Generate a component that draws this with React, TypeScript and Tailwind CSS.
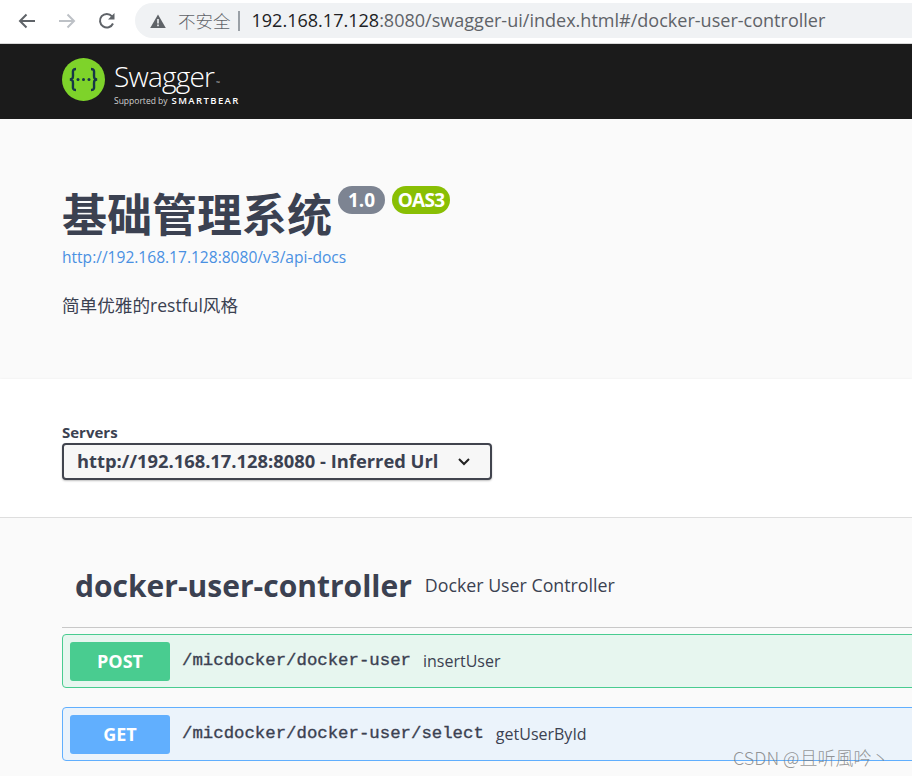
const sans = "font-['Open_Sans','Noto_Sans_CJK_SC',sans-serif]";

function BrowserBar() {
  return (
    <div className="flex h-[44px] items-start border-b border-[#d8d8d8] bg-white pt-[3px]">
      <div className="ml-[18px] mt-[9px] flex w-[117px] items-center gap-[22px]">
        <svg width="18" height="18" viewBox="0 0 18 18" fill="none" stroke="#5f6368" strokeWidth="2">
          <path d="M17 9H2M8.5 2.5 2 9l6.5 6.5" />
        </svg>
        <svg width="18" height="18" viewBox="0 0 18 18" fill="none" stroke="#bdc1c6" strokeWidth="2">
          <path d="M1 9h15M9.5 2.5 16 9l-6.5 6.5" />
        </svg>
        <svg width="18" height="18" viewBox="0 0 18 18" fill="none">
          <path d="M15 11.5A6.8 6.8 0 1 1 14 4.3" stroke="#5f6368" strokeWidth="2" />
          <path d="M16.5 1v6.5H10z" fill="#5f6368" />
        </svg>
      </div>
      <div className="flex h-[35px] flex-1 items-center rounded-l-[18px] bg-[#f0f2f4] pl-[15px] text-[18.050px] text-[#5f6368]">
        <svg width="16" height="14" viewBox="0 0 16 14" className="shrink-0">
          <path d="M8 0.5 15.8 14H0.2z" fill="#5f6368" />
          <rect x="7.2" y="5" width="1.6" height="4.5" fill="#f0f2f4" />
          <rect x="7.2" y="10.5" width="1.6" height="1.7" fill="#f0f2f4" />
        </svg>
        <span className="ml-[12px] font-['Noto_Sans_CJK_SC',sans-serif] text-[17.500px] font-light leading-none">不安全</span>
        <span className="ml-[7px] h-[20px] w-[2px] bg-[#9aa0a6]" />
        <span className={`ml-[12px] whitespace-nowrap ${sans}`}>
          <span className="text-[#202124]">192.168.17.128</span>:8080/swagger-ui/index.html#/docker-user-controller
        </span>
      </div>
    </div>
  );
}

function SwaggerHeader() {
  return (
    <div className="flex h-[75px] items-center bg-[#1b1b1b] pl-[62px] text-white">
      <svg width="43" height="43" viewBox="0 0 43 43" className="mb-[5px] shrink-0">
        <circle cx="21.5" cy="21.5" r="21.5" fill="#7ed32a" />
        <path d="M14 11c-4 0-3 3-3 6s0 4-3 4.500c3 .5 3 1.500 3 4.500s-1 6 3 6M29 11c4 0 3 3 3 6s0 4 3 4.500c-3 .5-3 1.500-3 4.500s1 6-3 6" fill="none" stroke="#173647" strokeWidth="2.400" />
        <circle cx="16" cy="21.500" r="1.500" fill="#173647" />
        <circle cx="21.500" cy="21.500" r="1.500" fill="#173647" />
        <circle cx="27" cy="21.500" r="1.500" fill="#173647" />
      </svg>
      <div className={`ml-[9px] mt-[3px] ${sans}`}>
        <div className="flex h-[32px] items-center text-[28px] font-light leading-none tracking-[-0.8px]">
          Swagger
          <span className="ml-[2px] mt-[14px] text-[5px] tracking-normal">™</span>
        </div>
        <div className="mt-[4px] flex items-center gap-[4px] whitespace-nowrap leading-[10px]">
          <span className="text-[8.500px] text-[#d0d0d0]">Supported by</span>
          <span className="text-[9.500px] font-semibold tracking-[1.400px]">SMARTBEAR</span>
        </div>
      </div>
    </div>
  );
}

function Info() {
  return (
    <div className={`h-[260px] bg-[#fafafa] pl-[62px] text-[#3b4151] ${sans}`}>
      <div className="flex items-start pt-[66px]">
        <h1 className="font-['Noto_Sans_CJK_SC',sans-serif] text-[45px] font-bold leading-[56px]">基础管理系统</h1>
        <span className="ml-[6px] mt-[1px] flex h-[28px] w-[47px] items-center justify-center rounded-full bg-[#7d8492] text-[19px] font-bold text-white">1.0</span>
        <span className="ml-[7px] mt-[1px] flex h-[28px] w-[58px] items-center justify-center rounded-full bg-[#89bf04] text-[19px] font-bold tracking-[-0.7px] text-white">OAS3</span>
      </div>
      <a className="mt-[6px] block text-[15.550px] leading-[20px] text-[#4990e2]">http://192.168.17.128:8080/v3/api-docs</a>
      <p className="mt-[26px] text-[17.600px] leading-[24px]">简单优雅的restful风格</p>
    </div>
  );
}

function Servers() {
  return (
    <div className={`flex h-[139px] flex-col border-b border-[#dedede] bg-white pl-[62px] pt-[44px] text-[#3b4151] shadow-[0_1px_3px_rgba(0,0,0,0.12)] ${sans}`}>
      <span className="text-[15px] font-bold leading-[18px]">Servers</span>
      <div className="mt-[2px] flex h-[37px] w-[430px] items-center rounded-[4px] border-2 border-[#41444e] bg-[#f7f7f7] pb-[2px] pl-[13px] text-[18.350px] font-bold shadow-[0_1px_2px_rgba(0,0,0,0.25)]">
        <span className="whitespace-nowrap">http://192.168.17.128:8080 - Inferred Url</span>
        <svg width="14" height="9" viewBox="0 0 14 9" fill="none" stroke="#222" strokeWidth="2" className="ml-[19px] mt-[2px]">
          <path d="M2 2l5 5 5-5" />
        </svg>
      </div>
    </div>
  );
}

function Operation({ method, path, name, border, bg, badge }: { method: string; path: string; name: string; border: string; bg: string; badge: string }) {
  return (
    <div className={`mr-[-20px] flex h-[54px] items-center rounded-[4px] border pl-[7px] ${border} ${bg}`}>
      <span className={`flex h-[39px] w-[100px] items-center justify-center rounded-[3px] text-[18px] font-bold text-white ${badge}`}>{method}</span>
      <span className="ml-[12px] whitespace-nowrap font-['Liberation_Mono',monospace] text-[17.350px] text-[#3b4151] [-webkit-text-stroke:0.35px_#3b4151]">{path}</span>
      <span className="ml-[12px] whitespace-nowrap text-[16px] text-[#3b4151]">{name}</span>
    </div>
  );
}

function Controller() {
  return (
    <div className={`h-[258px] bg-[#fafafa] pl-[62px] text-[#3b4151] ${sans}`}>
      <div className="flex h-[110px] items-end border-b border-[#c8c8c8] pb-[21px] pl-[13px]">
        <h2 className="text-[30px] font-bold leading-[40px]">docker-user-controller</h2>
        <span className="mb-[9px] ml-[13px] text-[17.800px] leading-[24px]">Docker User Controller</span>
      </div>
      <div className="mt-[6px] flex flex-col gap-[19px]">
        <Operation method="POST" path="/micdocker/docker-user" name="insertUser" border="border-[#49cc90]" bg="bg-[#e7f6ef]" badge="bg-[#49cc90]" />
        <Operation method="GET" path="/micdocker/docker-user/select" name="getUserById" border="border-[#61affe]" bg="bg-[#ebf3fb]" badge="bg-[#61affe]" />
      </div>
    </div>
  );
}

export default function App() {
  return (
    <div className="relative h-[776px] w-[912px] overflow-hidden bg-[#fafafa]">
      <BrowserBar />
      <SwaggerHeader />
      <Info />
      <Servers />
      <Controller />
      <span className="absolute left-[733px] top-[745px] whitespace-nowrap font-['Noto_Sans_CJK_SC',sans-serif] text-[18px] font-light leading-[24px] text-[#7a7a7a]/80">CSDN @且听風吟丶</span>
    </div>
  );
}
